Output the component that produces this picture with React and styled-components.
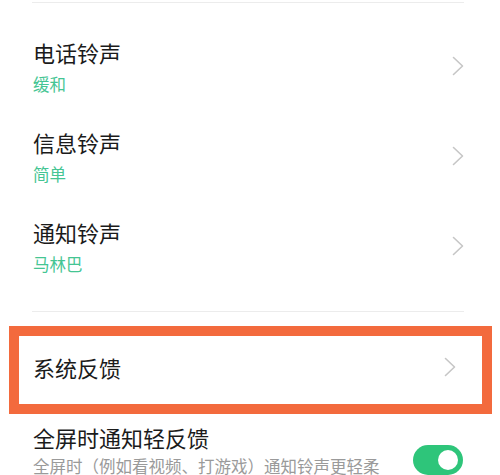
import React from "react";
import styled, { createGlobalStyle } from "styled-components";

const GlobalStyle = createGlobalStyle`
  html, body {
    margin: 0;
    padding: 0;
    background: #ffffff;
  }
  body {
    font-family: "Noto Sans CJK SC", "Noto Sans", sans-serif;
    color: #1b1b1b;
    overflow: hidden;
  }
`;

const Page = styled.div`
  width: 500px;
  height: 475px;
  padding-top: 2px;
  box-sizing: border-box;
  overflow: hidden;
`;

const Divider = styled.div`
  height: 1px;
  margin: 0 36px 0 32px;
  background: #ececec;
`;

const Group = styled.div`
  padding: 18px 0 20px;
`;

const Row = styled.div`
  height: 90px;
  display: flex;
  align-items: center;
  padding: 0 36px 0 33px;
`;

const Texts = styled.div`
  flex: 1;
  display: flex;
  flex-direction: column;
  gap: ${({ tight }) => (tight ? "3px" : "6px")};
`;

const Title = styled.div`
  font-size: 22px;
  line-height: 30px;
  color: #1b1b1b;
`;

const Value = styled.div`
  font-size: 16.5px;
  line-height: 22px;
  color: ${({ muted }) => (muted ? "#9a9a9a" : "#45c593")};
  white-space: nowrap;
`;

const Highlight = styled.div`
  margin: 14px 8px 0 9px;
  height: 88px;
  box-sizing: border-box;
  border: 10px solid #f36a3d;
  display: flex;
  align-items: center;
  padding: 0 26px 6px 14px;
`;

const ToggleRow = styled.div`
  display: flex;
  align-items: flex-end;
  padding: 8px 37px 0 33px;
`;

const Switch = styled.div`
  width: 50px;
  height: 30px;
  border-radius: 15px;
  background: #2ec57a;
  position: relative;
  flex-shrink: 0;
  margin-bottom: 2px;
  &::after {
    content: "";
    position: absolute;
    right: 5px;
    top: 5px;
    width: 20px;
    height: 20px;
    border-radius: 50%;
    background: #ffffff;
  }
`;

const Chevron = () => (
  <svg width="12" height="20" viewBox="0 0 12 20" fill="none">
    <path d="M1.5 1.5 L10.5 10 L1.5 18.5" stroke="#c6c6c6" strokeWidth="1.6" strokeLinecap="round" strokeLinejoin="round" />
  </svg>
);

const rings = [
  { title: "电话铃声", value: "缓和" },
  { title: "信息铃声", value: "简单" },
  { title: "通知铃声", value: "马林巴" },
];

export default function App() {
  return (
    <Page>
      <GlobalStyle />
      <Divider />
      <Group>
        {rings.map((r) => (
          <Row key={r.title}>
            <Texts>
              <Title>{r.title}</Title>
              <Value>{r.value}</Value>
            </Texts>
            <Chevron />
          </Row>
        ))}
      </Group>
      <Divider />
      <Highlight>
        <Texts>
          <Title>系统反馈</Title>
        </Texts>
        <Chevron />
      </Highlight>
      <ToggleRow>
        <Texts tight>
          <Title>全屏时通知轻反馈</Title>
          <Value muted>全屏时（例如看视频、打游戏）通知铃声更轻柔</Value>
        </Texts>
        <Switch />
      </ToggleRow>
    </Page>
  );
}
